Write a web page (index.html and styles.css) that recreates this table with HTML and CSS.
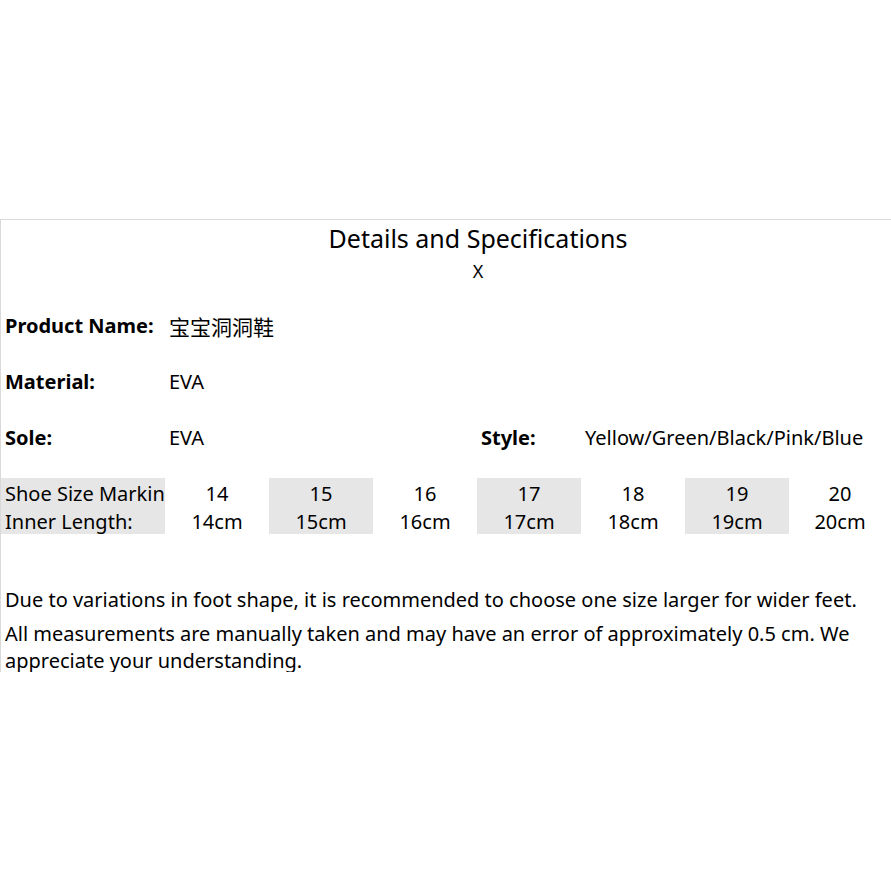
FILE: index.html
```html
<!DOCTYPE html>
<html lang="en">
<head>
  <meta charset="UTF-8" />
  <title>Details and Specifications</title>
  <link rel="stylesheet" href="styles.css">
</head>
<body>

  <div class="sheet">
    <div class="heading">
      <h1 class="title">Details and Specifications</h1>
      <div class="close">X</div>
    </div>

    <div class="specs">
      <div class="label">Product Name:</div>
      <div class="value cjk">宝宝洞洞鞋</div>
      <div class="fill"></div>

      <div class="label">Material:</div>
      <div class="value">EVA</div>
      <div class="fill"></div>

      <div class="label">Sole:</div>
      <div class="value">EVA</div>
      <div class="label">Style:</div>
      <div class="value">Yellow/Green/Black/Pink/Blue</div>
    </div>

    <div class="sizes">
      <div class="size-cell head shade">
        <span>Shoe Size Marking:</span>
        <span>Inner Length:</span>
      </div>
      <div class="size-cell"><span>14</span><span>14cm</span></div>
      <div class="size-cell shade"><span>15</span><span>15cm</span></div>
      <div class="size-cell"><span>16</span><span>16cm</span></div>
      <div class="size-cell shade"><span>17</span><span>17cm</span></div>
      <div class="size-cell"><span>18</span><span>18cm</span></div>
      <div class="size-cell shade"><span>19</span><span>19cm</span></div>
      <div class="size-cell"><span>20</span><span>20cm</span></div>
    </div>

    <div class="notes">
      <p>Due to variations in foot shape, it is recommended to choose one size larger for wider feet.</p>
      <p>All measurements are manually taken and may have an error of approximately 0.5 cm. We appreciate your understanding.</p>
    </div>
  </div>

</body>
</html>
```
FILE: styles.css
```css
* {
  margin: 0;
  padding: 0;
  box-sizing: border-box;
}

body {
  font-family: "Noto Sans", "Noto Sans CJK SC", sans-serif;
  font-size: 20px;
  color: #000;
  background: #fff;
}

.sheet {
  height: 453px;
  margin-top: 219px;
  padding-top: 3px;
  border-top: 1px solid #d9d9d9;
  border-left: 1px solid #d9d9d9;
  overflow: hidden;
}

.heading {
  padding-left: 64px;
  text-align: center;
}

.title {
  font-size: 25px;
  font-weight: 400;
  line-height: 30px;
}

.close {
  font-size: 18px;
  line-height: 30px;
  margin-top: 3px;
}

.specs {
  display: grid;
  grid-template-columns: 164px 312px 104px 1fr;
  grid-auto-rows: 56px;
  margin-top: 12px;
  line-height: 56px;
}

.specs .label {
  font-weight: 700;
  padding-left: 4px;
}

.specs .value {
  padding-left: 4px;
  white-space: nowrap;
}

.specs .fill {
  grid-column: span 2;
}

.cjk {
  font-family: "Noto Sans CJK SC", sans-serif;
  font-size: 21px;
}

.sizes {
  display: grid;
  grid-template-columns: 164px repeat(6, 104px) 1fr;
  margin-top: 12px;
}

.size-cell {
  display: flex;
  flex-direction: column;
  align-items: center;
  height: 56px;
  padding-top: 2px;
  line-height: 28px;
  white-space: nowrap;
  overflow: hidden;
}

.size-cell.head {
  align-items: flex-start;
  padding-left: 4px;
}

.shade {
  background: #e6e6e6;
}

.notes {
  max-width: 880px;
  margin-top: 52px;
  padding-left: 4px;
  line-height: 27px;
}

.notes p + p {
  margin-top: 7px;
}
```
